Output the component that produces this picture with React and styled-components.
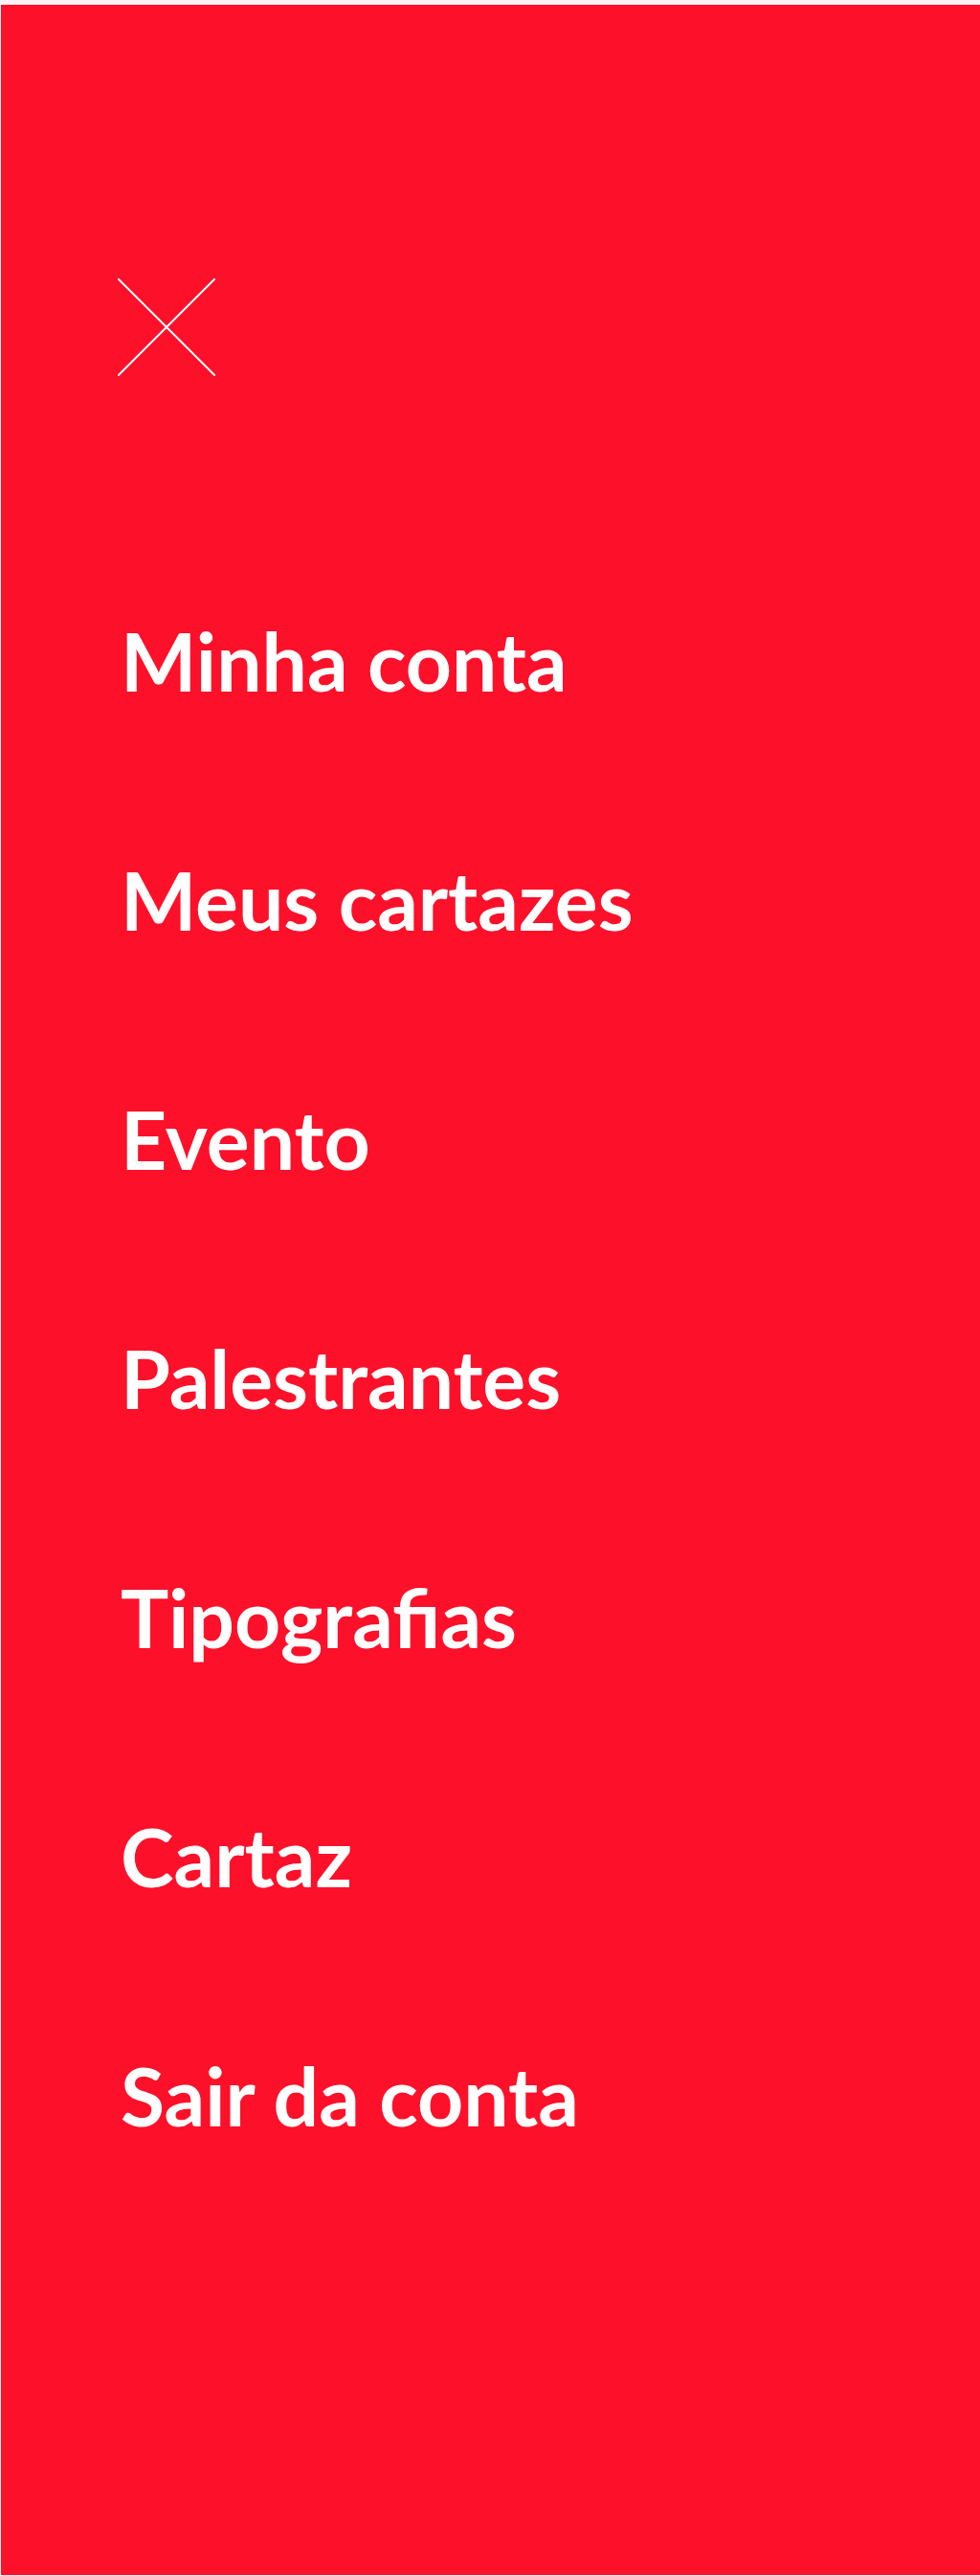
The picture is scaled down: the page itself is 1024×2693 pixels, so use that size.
import React from "react";
import styled, { createGlobalStyle } from "styled-components";

const GlobalStyle = createGlobalStyle`
  html, body {
    margin: 0;
    padding: 0;
    background: #fdf3f5;
  }
`;

const Panel = styled.nav`
  margin: 5px 0 1px 1px;
  min-height: 2687px;
  box-sizing: border-box;
  background: #fd1029;
  padding: 286px 0 0 122px;
`;

const CloseButton = styled.button`
  display: block;
  width: 102px;
  height: 102px;
  padding: 0;
  border: 0;
  background: transparent;
  cursor: pointer;
`;

const MenuList = styled.ul`
  list-style: none;
  margin: 173px 0 0;
  padding: 0 0 0 3px;
`;

const MenuItem = styled.li`
  height: 250px;
  line-height: 250px;
`;

const MenuLink = styled.a`
  font-family: Lato, "Open Sans", sans-serif;
  font-weight: 700;
  font-size: 84px;
  color: #fff;
  text-decoration: none;
  white-space: nowrap;
`;

const items = [
  "Minha conta",
  "Meus cartazes",
  "Evento",
  "Palestrantes",
  "Tipografias",
  "Cartaz",
  "Sair da conta",
];

const App = () => {
  return (
    <>
      <GlobalStyle />
      <Panel>
        <CloseButton aria-label="Fechar menu">
          <svg width="102" height="102" viewBox="0 0 102 102">
            <path d="M1 1 L101 101 M101 1 L1 101" stroke="#fff" strokeWidth="2" strokeLinecap="round" />
          </svg>
        </CloseButton>
        <MenuList>
          {items.map((label) => (
            <MenuItem key={label}>
              <MenuLink href="#">{label}</MenuLink>
            </MenuItem>
          ))}
        </MenuList>
      </Panel>
    </>
  );
};

export default App;
